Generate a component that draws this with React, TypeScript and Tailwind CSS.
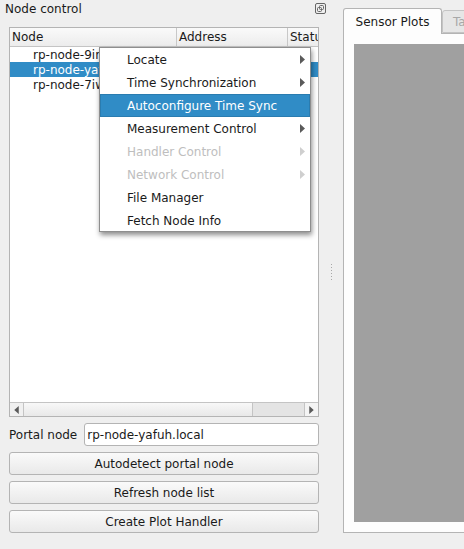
const menuItems = [
  { label: "Locate", submenu: true },
  { label: "Time Synchronization", submenu: true },
  { label: "Autoconfigure Time Sync", active: true },
  { label: "Measurement Control", submenu: true },
  { label: "Handler Control", submenu: true, disabled: true },
  { label: "Network Control", submenu: true, disabled: true },
  { label: "File Manager" },
  { label: "Fetch Node Info" },
];

const nodes = ["rp-node-9ir", "rp-node-yafuh", "rp-node-7iw"];

function Arrow({ color, h = 9, left }: { color: string; h?: number; left?: boolean }) {
  return (
    <svg width="5" height={h} viewBox="0 0 5 9" className="shrink-0">
      <path d={left ? "M5 0 L0 4.5 L5 9 Z" : "M0 0 L5 4.5 L0 9 Z"} fill={color} />
    </svg>
  );
}

function ContextMenu() {
  return (
    <div className="absolute left-[99px] top-[47px] z-10 h-[185px] w-[212px] border border-[#8e8e8e] bg-white shadow-[1px_3px_5px_rgba(0,0,0,0.45)]">
      {menuItems.map((item) => (
        <div
          key={item.label}
          className={
            "flex h-[23px] items-center justify-between pl-[27px] pr-[5px] " +
            (item.active
              ? "bg-[#308cc6] text-white outline outline-[#2a7cb0] -outline-offset-1 "
              : "") +
            (item.disabled ? "text-[#bebebe]" : "")
          }
        >
          <span>{item.label}</span>
          {item.submenu && <Arrow color={item.disabled ? "#cfcfcf" : "#5a5a5a"} />}
        </div>
      ))}
    </div>
  );
}

function NodeTable() {
  return (
    <div className="relative flex h-[390px] flex-col border border-[#b4b4b4] bg-white">
      <div className="flex h-[19px] shrink-0 border-b border-[#c4c4c4] bg-gradient-to-b from-[#fafafa] to-[#ececec] leading-[18px]">
        <div className="w-[167px] border-r border-[#c8c8c8] pl-[2px]">Node</div>
        <div className="w-[111px] border-r border-[#c8c8c8] pl-[2px]">Address</div>
        <div className="min-w-0 flex-1 overflow-hidden whitespace-nowrap pl-[2px]">Status</div>
      </div>
      <div className="flex-1">
        {nodes.map((name, i) => (
          <div
            key={name}
            className={
              "h-[15px] pl-[23px] leading-[17px] " + (i === 1 ? "bg-[#308cc6] text-white" : "")
            }
          >
            {name}
          </div>
        ))}
      </div>
      <div className="flex h-[14px] shrink-0 border-t border-[#c4c4c4] bg-[#f0f0f0]">
        <div className="flex w-[14px] items-center justify-center border-r border-[#c4c4c4]">
          <Arrow color="#5a5a5a" h={8} left />
        </div>
        <div className="w-[229px] border-r border-[#c4c4c4] bg-gradient-to-b from-[#f8f8f8] to-[#e8e8e8]" />
        <div className="flex-1 bg-[#e4e4e4]" />
        <div className="flex w-[14px] items-center justify-center border-l border-[#c4c4c4] bg-[#f4f4f4]">
          <Arrow color="#5a5a5a" h={8} />
        </div>
      </div>
    </div>
  );
}

function Button({ children }: { children: string }) {
  return (
    <button className="h-[23px] w-full rounded-[3px] border border-[#b4b4b4] bg-gradient-to-b from-[#fafafa] to-[#e9e9e9] text-center">
      {children}
    </button>
  );
}

export default function App() {
  return (
    <div className="relative flex h-[549px] w-[464px] overflow-hidden bg-[#efefef] font-['DejaVu_Sans',sans-serif] text-[12px] text-[#1a1a1a]">
      <div className="flex w-[319px] shrink-0 flex-col pl-[9px]">
        <div className="flex h-[27px] shrink-0 justify-between pb-[10px]">
          <span className="-ml-1 leading-[19px]">Node control</span>
          <svg width="11" height="11" viewBox="0 0 11 11" className="-mr-[7px] mt-[3px]" fill="none" stroke="#666">
            <rect x="0.5" y="0.5" width="10" height="10" rx="1.5" />
            <rect x="4.5" y="2.5" width="4" height="4" rx="1" />
            <rect x="2.5" y="4.5" width="4" height="4" rx="1" />
          </svg>
        </div>
        <NodeTable />
        <div className="mt-[6px] flex h-[23px] items-center gap-[7px]">
          <span className="whitespace-nowrap">Portal node</span>
          <input
            readOnly
            value="rp-node-yafuh.local"
            className="h-[23px] min-w-0 flex-1 rounded-[3px] border border-[#b4b4b4] bg-white pl-[2px] outline-none"
          />
        </div>
        <div className="mt-[6px] flex flex-col gap-[6px]">
          <Button>Autodetect portal node</Button>
          <Button>Refresh node list</Button>
          <Button>Create Plot Handler</Button>
        </div>
      </div>

      <div className="flex w-[24px] shrink-0 items-center justify-center pb-[5px]">
        <div className="flex flex-col gap-[2px]">
          {[0, 1, 2, 3, 4, 5].map((n) => (
            <div key={n} className="h-px w-px bg-[#a8a8a8]" />
          ))}
        </div>
      </div>

      <div className="flex w-[200px] shrink-0 flex-col pt-2">
        <div className="flex h-[25px] shrink-0 items-end">
          <div className="z-[1] -mb-px flex h-[26px] w-[99px] items-center justify-center rounded-t-[3px] border border-b-0 border-[#b4b4b4] bg-[#fdfdfd] pt-px">
            Sensor Plots
          </div>
          <div className="flex h-[23px] w-[60px] items-center rounded-t-[3px] border border-[#c4c4c4] bg-[#e6e6e6] pl-[10px] text-[#a8a8a8]">
            Tab
          </div>
        </div>
        <div className="h-[500px] border border-[#b4b4b4] bg-[#fdfdfd] p-[10px]">
          <div className="h-[478px] w-full bg-[#a0a0a0]" />
        </div>
      </div>

      <ContextMenu />
    </div>
  );
}
